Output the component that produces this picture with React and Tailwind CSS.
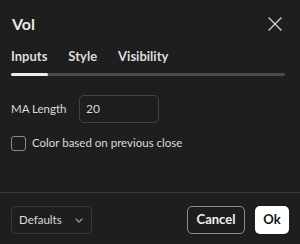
import React from "react";

export default function App() {
  return (
    <div className="w-[300px] h-[244px] bg-[#1e1e1e] text-[#dbdbdb] flex flex-col overflow-hidden" style={{ fontFamily: 'Lato, "Noto Sans", sans-serif' }}>
      <div className="flex items-center justify-between pl-3 pr-[18px] pt-[11px] h-[36px]">
        <div className="text-[16px] font-bold text-[#e8e8e8] leading-none">Vol</div>
        <svg width="14" height="14" viewBox="0 0 14 14" className="text-[#d0d0d0]">
          <path d="M1 1L13 13M13 1L1 13" stroke="currentColor" strokeWidth="1.4" strokeLinecap="round" />
        </svg>
      </div>
      <div className="px-[11px] mt-[10px]">
        <div className="flex gap-[21px] text-[13px] font-bold text-[#dcdcdc] leading-none h-[20px] items-center">
          <span>Inputs</span>
          <span>Style</span>
          <span>Visibility</span>
        </div>
        <div className="mt-[7px] h-[3px] w-[274px] bg-[#4a4a4a] rounded-full flex">
          <div className="w-[37px] h-full bg-[#ececec] rounded-full" />
        </div>
      </div>
      <div className="px-[11px] mt-[19px] flex items-center h-[28px]">
        <span className="text-[11.5px] w-[68px]">MA Length</span>
        <div className="w-[80px] h-[28px] border border-[#444444] rounded-[5px] flex items-center pl-[6px] text-[12px]">20</div>
      </div>
      <div className="px-[11px] mt-[12px] flex items-center gap-[6px] h-[16px]">
        <div className="w-[15px] h-[15px] border border-[#8a8a8a] rounded-[3px]" />
        <span className="text-[11.5px]">Color based on previous close</span>
      </div>
      <div className="mt-[41px] border-t border-[#3a3a3a]" />
      <div className="flex items-center px-[11px] pt-[13px]">
        <div className="w-[81px] h-[28px] border border-[#3a3a3a] rounded-[5px] flex items-center justify-between pl-[7px] pr-[8px] text-[11.5px]">
          <span>Defaults</span>
          <svg width="8" height="5" viewBox="0 0 8 5" className="text-[#a0a0a0]">
            <path d="M1 1L4 4L7 1" fill="none" stroke="currentColor" strokeWidth="1.1" strokeLinecap="round" strokeLinejoin="round" />
          </svg>
        </div>
        <div className="flex-1" />
        <div className="w-[58px] h-[28px] border border-[#8c8c8c] rounded-[5px] flex items-center justify-center text-[13px] font-bold text-[#f0f0f0]">Cancel</div>
        <div className="ml-[10px] w-[34px] h-[28px] bg-white rounded-[5px] flex items-center justify-center text-[13px] font-bold text-[#131313]">Ok</div>
      </div>
    </div>
  );
}
